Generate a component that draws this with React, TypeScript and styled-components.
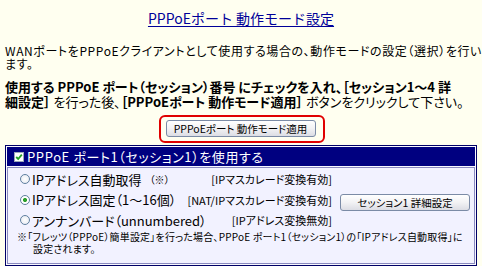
import React from 'react';
import styled, { createGlobalStyle } from 'styled-components';

const Global = createGlobalStyle`
  html, body { margin: 0; padding: 0; background: #fffff0; }
  body {
    font-family: "Noto Sans CJK JP", "Noto Sans", sans-serif;
    color: #000;
    -webkit-font-smoothing: antialiased;
  }
  * { box-sizing: border-box; }
`;

const Page = styled.div`
  width: 482px;
  height: 266px;
  overflow: hidden;
  padding: 9px 5px 0 5px;
  display: flex;
  flex-direction: column;
`;

const Title = styled.h1`
  margin: 0;
  text-align: center;
  font-size: 14px;
  font-weight: normal;
  line-height: 18px;
  color: #000099;
  text-decoration: underline;
  text-underline-offset: 2px;
`;

const Intro = styled.p`
  margin: 17px 0 0 0;
  font-size: 12px;
  line-height: 13px;
  letter-spacing: 0.6px;
  white-space: nowrap;
  font-feature-settings: "palt";
`;

const Instruction = styled.p`
  margin: 9px 0 0 0;
  font-size: 13px;
  line-height: 15px;
  white-space: nowrap;
  font-feature-settings: "palt";
`;

const Strong = styled.b`
  font-weight: bold;
`;

const ApplyFrame = styled.div`
  align-self: center;
  margin-top: 6px;
  margin-left: 1px;
  border: 2px solid #e00000;
  border-radius: 6px;
  padding: 3px 7px 4px 5px;
  display: flex;
`;

const PushButton = styled.button<{ $w: number }>`
  width: ${p => p.$w}px;
  height: 17px;
  padding: 0;
  border: 1px solid #7b8ba6;
  border-radius: 3px;
  background: linear-gradient(#ffffff, #f2f2f4 50%, #dcdde4);
  font-family: "Noto Sans CJK JP", sans-serif;
  font-size: 10.5px;
  line-height: 15px;
  color: #000;
  white-space: nowrap;
  font-feature-settings: "palt";
`;

const Panel = styled.section`
  margin-top: 2px;
  flex: 1;
  border: 1px solid #000066;
  background: #f8f8ff;
  padding: 1px;
  display: flex;
  flex-direction: column;
  gap: 1px;
`;

const PanelHeader = styled.div`
  height: 19px;
  flex: none;
  background: #000080;
  color: #fff;
  display: flex;
  align-items: center;
  gap: 3px;
  padding-left: 7px;
  font-size: 13px;
  letter-spacing: 0.6px;
  white-space: nowrap;
  font-feature-settings: "palt";
`;

const PanelBody = styled.div`
  flex: 1;
  border: 1px solid #8a8abf;
  background: #f2f2ff;
  padding: 1px 4px 8px 12px;
`;

const Options = styled.div`
  display: grid;
  grid-template-columns: 157px 147px 1fr;
  column-gap: 8px;
  grid-auto-rows: 20.5px;
  align-items: center;
`;

const OptionLabel = styled.label`
  display: flex;
  align-items: center;
  gap: 2px;
  font-size: 13px;
  white-space: nowrap;
  font-feature-settings: "palt";
`;

const Small = styled.span`
  font-size: 10px;
  margin-left: 6px;
`;

const Mode = styled.span`
  text-align: right;
  font-size: 11px;
  white-space: nowrap;
  font-feature-settings: "palt";
`;

const Radio = styled.span<{ $on?: boolean }>`
  width: 10px;
  height: 10px;
  border-radius: 50%;
  border: 1px solid #5f7f9f;
  background: ${p => (p.$on ? 'radial-gradient(circle, #2ca02c 0 1.8px, #ffffff 2.3px)' : 'radial-gradient(circle, #ffffff, #e4e8f0)')};
  flex: none;
`;

const Note = styled.p`
  margin: 0 0 0 -3px;
  font-size: 10px;
  line-height: 12px;
  letter-spacing: 0.2px;
  white-space: nowrap;
  font-feature-settings: "palt";
`;

const Indent = styled.span`
  padding-left: 16px;
`;

const CheckIcon = () => (
  <svg width="10" height="10" viewBox="0 0 10 10" style={{ flex: 'none', marginTop: 1 }}>
    <rect x="0.5" y="0.5" width="9" height="9" fill="#ffffff" stroke="#9aa7b8" />
    <path d="M2.2 5 L4.2 7 L7.8 2.6" fill="none" stroke="#21a121" strokeWidth="1.8" />
  </svg>
);

export default function App() {
  return (
    <>
      <Global />
      <Page>
        <Title>PPPoEポート 動作モード設定</Title>
        <Intro>
          WANポートをPPPoEクライアントとして使用する場合の、動作モードの設定（選択）を行い
          <br />
          ます。
        </Intro>
        <Instruction>
          <Strong>使用する PPPoE ポート（セッション）番号 にチェックを入れ、［セッション1〜4 詳</Strong>
          <br />
          <Strong>細設定］</Strong> を行った後、<Strong>［PPPoEポート 動作モード適用］</Strong> ボタンをクリックして下さい。
        </Instruction>
        <ApplyFrame>
          <PushButton $w={150}>PPPoEポート 動作モード適用</PushButton>
        </ApplyFrame>
        <Panel>
          <PanelHeader>
            <CheckIcon />
            <span>PPPoE ポート1（セッション1）を使用する</span>
          </PanelHeader>
          <PanelBody>
            <Options>
              <OptionLabel>
                <Radio />
                IPアドレス自動取得<Small>（※）</Small>
              </OptionLabel>
              <Mode>[IPマスカレード変換有効]</Mode>
              <span />
              <OptionLabel>
                <Radio $on />
                IPアドレス固定（1〜16個）
              </OptionLabel>
              <Mode>[NAT/IPマスカレード変換有効]</Mode>
              <span>
                <PushButton $w={130}>セッション1 詳細設定</PushButton>
              </span>
              <OptionLabel>
                <Radio />
                アンナンバード（unnumbered）
              </OptionLabel>
              <Mode>[IPアドレス変換無効]　</Mode>
              <span />
            </Options>
            <Note>
              ※「フレッツ（PPPoE）簡単設定」を行った場合、PPPoE ポート1（セッション1）の「IPアドレス自動取得」に
              <br />
              <Indent>設定されます。</Indent>
            </Note>
          </PanelBody>
        </Panel>
      </Page>
    </>
  );
}
